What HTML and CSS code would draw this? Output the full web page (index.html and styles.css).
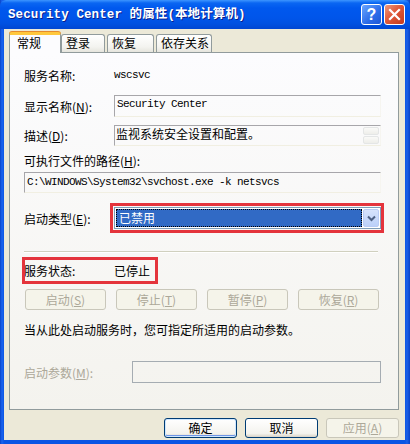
FILE: index.html
```html
<!DOCTYPE html>
<html>
<head>
<meta charset="utf-8">
<link rel="stylesheet" href="styles.css">
</head>
<body>
<div class="window">
  <div class="titlebar">
    <span class="title">Security Center 的属性(本地计算机)</span>
    <div class="tbtns">
      <span class="tb help">?</span>
      <span class="tb close"><svg width="13" height="13" viewBox="0 0 13 13"><path d="M2 2 L11 11 M11 2 L2 11" stroke="#fff" stroke-width="2.2" stroke-linecap="square"/></svg></span>
    </div>
  </div>
  <div class="client">
    <div class="tabs">
      <div class="tab sel">常规</div>
      <div class="tab t2">登录</div>
      <div class="tab t3">恢复</div>
      <div class="tab t4">依存关系</div>
    </div>
    <div class="panel">
      <div class="row r1">
        <span class="lbl">服务名称:</span>
        <span class="mono">wscsvc</span>
      </div>
      <div class="row r2">
        <span class="lbl">显示名称(<u>N</u>):</span>
        <div class="ro mono">Security Center</div>
      </div>
      <div class="row r3">
        <span class="lbl">描述(<u>D</u>):</span>
        <div class="ro desc">
          <span class="desctext">监视系统安全设置和配置。</span>
          <div class="sbar"><span class="sb"></span><span class="sb"></span></div>
        </div>
      </div>
      <div class="row r4">
        <span class="lbl">可执行文件的路径(<u>H</u>):</span>
      </div>
      <div class="row r5">
        <div class="ro mono path">C:\WINDOWS\System32\svchost.exe -k netsvcs</div>
      </div>
      <div class="row r6">
        <span class="lbl">启动类型(<u>E</u>):</span>
        <div class="select">
          <div class="selfill"><span>已禁用</span></div>
          <div class="selbtn"><svg width="9" height="7" viewBox="0 0 9 7"><path d="M1 1.5 L4.5 5 L8 1.5" fill="none" stroke="#4D6185" stroke-width="2"/></svg></div>
        </div>
      </div>
      <div class="sep"></div>
      <div class="row r7">
        <div class="statuswrap">
          <span class="lbl">服务状态:</span>
          <span>已停止</span>
        </div>
      </div>
      <div class="row btnrow">
        <span class="btn dis">启动(<u>S</u>)</span>
        <span class="btn dis">停止(<u>T</u>)</span>
        <span class="btn dis">暂停(<u>P</u>)</span>
        <span class="btn dis">恢复(<u>R</u>)</span>
      </div>
      <div class="row hint">当从此处启动服务时，您可指定所适用的启动参数。</div>
      <div class="row r8">
        <span class="lbl2 distext">启动参数(<u>M</u>):</span>
        <div class="parambox"></div>
      </div>
    </div>
    <div class="footer">
      <span class="btn fb def">确定</span>
      <span class="btn fb">取消</span>
      <span class="btn fb dis">应用(<u>A</u>)</span>
    </div>
  </div>
</div>
</body>
</html>
```
FILE: styles.css
```css
html, body {
  margin: 0;
  padding: 0;
  background: #0A52E0;
}
body {
  font-family: "Noto Sans CJK SC", sans-serif;
  font-size: 12px;
  color: #000;
}
.window {
  width: 410px;
  height: 444px;
  background: linear-gradient(90deg, #0843C8 0, #1A64F0 2px, #0A55E4 4px, #0A55E4 405px, #1A5FE8 407px, #0842C6 410px);
  overflow: hidden;
}
.titlebar {
  height: 29px;
  display: flex;
  align-items: center;
  justify-content: space-between;
  background: linear-gradient(#3D95FF 0, #0A66F2 3px, #0058EE 8px, #0055EA 18px, #0050E0 24px, #0046D2 29px);
  border-radius: 6px 6px 0 0;
}
.title {
  margin-left: 8px;
  color: #fff;
  font-family: "Liberation Mono", "Noto Sans CJK SC", monospace;
  font-weight: bold;
  font-size: 12.5px;
  letter-spacing: 0.1px;
  text-shadow: 1px 1px #0A1F8C;
  line-height: 16px;
  position: relative;
  top: 0;
}
.tbtns {
  display: flex;
  gap: 2px;
  margin-right: 5px;
}
.tb {
  width: 21px;
  height: 21px;
  box-sizing: border-box;
  border: 1px solid #fff;
  border-radius: 3px;
  display: flex;
  align-items: center;
  justify-content: center;
}
.help {
  background: linear-gradient(135deg, #6AA6FF, #2C6BE8 60%, #1E56D6);
  color: #fff;
  font-family: "Liberation Sans", sans-serif;
  font-weight: bold;
  font-size: 16px;
  line-height: 19px;
}
.close {
  background: linear-gradient(135deg, #EE9A7E, #E0593A 45%, #C43A1C);
}
.client {
  margin: 0 5px 0 4px;
  height: 411px;
  background: #ECE9D8;
}
.tabs {
  height: 23px;
  display: flex;
  align-items: flex-end;
  padding-left: 5px;
  position: relative;
  z-index: 2;
}
.tab {
  box-sizing: border-box;
  height: 18px;
  border: 1px solid #919B9C;
  border-bottom: none;
  border-radius: 3px 3px 0 0;
  background: linear-gradient(#FFFFFF, #F3F3EF 70%, #E6E5DD);
  font-size: 12px;
  line-height: 16px;
  padding-left: 4px;
}
.tab.sel {
  width: 52px;
  height: 21px;
  margin-bottom: -1px;
  border-top: 3px solid #FFC83C;
  box-shadow: 0 -1px 0 #E68B2C;
  background: #FCFCFE;
  padding-left: 7px;
  line-height: 15px;
}
.t2 { width: 44px; }
.t3 { width: 47px; margin-left: 2px; }
.t4 { width: 56px; margin-left: 2px; }
.panel {
  position: relative;
  z-index: 1;
  margin-left: 5px;
  width: 390px;
  height: 358px;
  box-sizing: border-box;
  border: 1px solid #919B9C;
  background: linear-gradient(#FCFCFE, #F4F3EE);
  padding: 0 17px 0 14px;
}
.row {
  display: flex;
  align-items: center;
}
.lbl {
  width: 90px;
  flex: none;
  white-space: nowrap;
}
.lbl2 {
  width: 108px;
  flex: none;
  white-space: nowrap;
}
.distext { color: #ACA899; }
.mono {
  font-family: "Liberation Mono", monospace;
  font-size: 11px;
  letter-spacing: -0.6px;
}
.r1 { margin-top: 12px; height: 20px; }
.r2 { margin-top: 10px; height: 22px; }
.r3 { margin-top: 8px; height: 21px; }
.r4 { margin-top: 6px; height: 16px; }
.r5 { margin-top: 4px; height: 21px; }
.r6 { margin-top: 14px; height: 22px; }
.ro {
  flex: 1;
  align-self: stretch;
  box-sizing: border-box;
  border-top: 1px solid #A7A6AA;
  border-left: 1px solid #A7A6AA;
  border-right: 1px solid #F6F5F0;
  border-bottom: 1px solid #F1EFE2;
  padding: 1px 0 0 2px;
  line-height: 14px;
}
.desc {
  display: flex;
  padding: 0 1px 0 1px;
  line-height: 15px;
}
.desctext { flex: 1; font-size: 12px; }
.sbar {
  width: 16px;
  display: flex;
  flex-direction: column;
  gap: 1px;
  padding-top: 1px;
}
.sb {
  height: 8px;
  box-sizing: border-box;
  border: 1px solid #E4E6E6;
  border-radius: 2px;
  background: linear-gradient(#FAFAF8, #EEEEEA);
}
.path {
  padding-left: 2px;
  padding-top: 2px;
}
.select {
  flex: 1;
  align-self: stretch;
  position: relative;
  box-sizing: border-box;
  border: 1px solid #7F9DB9;
  background: #fff;
  display: flex;
  padding: 1px;
}
.select::after {
  content: "";
  position: absolute;
  left: -5px;
  top: -5px;
  right: -4px;
  bottom: -5px;
  border: 3px solid #E4343C;
  pointer-events: none;
}
.selfill {
  flex: 1;
  background: #316AC5;
  color: #fff;
  outline: 1px dotted #000;
  outline-offset: -1px;
  padding-left: 3px;
  line-height: 17px;
  margin-right: 1px;
}
.selbtn {
  width: 16px;
  box-sizing: border-box;
  border: 1px solid #B9CCF5;
  border-radius: 2px;
  background: linear-gradient(#D6E3FD, #BCD0F9);
  display: flex;
  align-items: center;
  justify-content: center;
}
.sep {
  margin-top: 22px;
  height: 1px;
  width: 354px;
  background: #D0D0BF;
  border-bottom: 1px solid #fff;
}
.r7 { margin-top: 9px; height: 16px; }
.statuswrap {
  position: relative;
  display: flex;
  align-items: center;
  width: 134px;
  height: 16px;
}
.statuswrap::after {
  content: "";
  position: absolute;
  left: -2px;
  top: -5px;
  right: 0;
  bottom: -6px;
  border: 3px solid #E4343C;
}
.btnrow {
  margin-top: 11px;
  height: 21px;
  margin-left: 1px;
  width: 354px;
  justify-content: space-between;
}
.btn {
  box-sizing: border-box;
  width: 81px;
  height: 21px;
  border: 1px solid #003C74;
  border-radius: 3px;
  background: linear-gradient(#FFFFFF, #F4F3EE 80%, #D8D2C6);
  display: flex;
  align-items: center;
  justify-content: center;
  line-height: 14px;
}
.btn.dis {
  border-color: #C9C7BA;
  background: #F5F4EA;
  color: #ACA899;
}
.hint { margin-top: 11px; height: 16px; }
.r8 { margin-top: 24px; height: 22px; }
.parambox {
  flex: 1;
  align-self: stretch;
  border: 1px solid #A5ACB2;
  box-sizing: border-box;
}
.footer {
  display: flex;
  justify-content: flex-end;
  gap: 8px;
  padding-top: 8px;
  padding-right: 6px;
}
.fb {
  width: 73px;
  height: 20px;
}
.fb.def {
  box-shadow: inset 0 0 0 1px #CEE7FF, inset 0 -1px 0 1px #6F95E6;
}
```
